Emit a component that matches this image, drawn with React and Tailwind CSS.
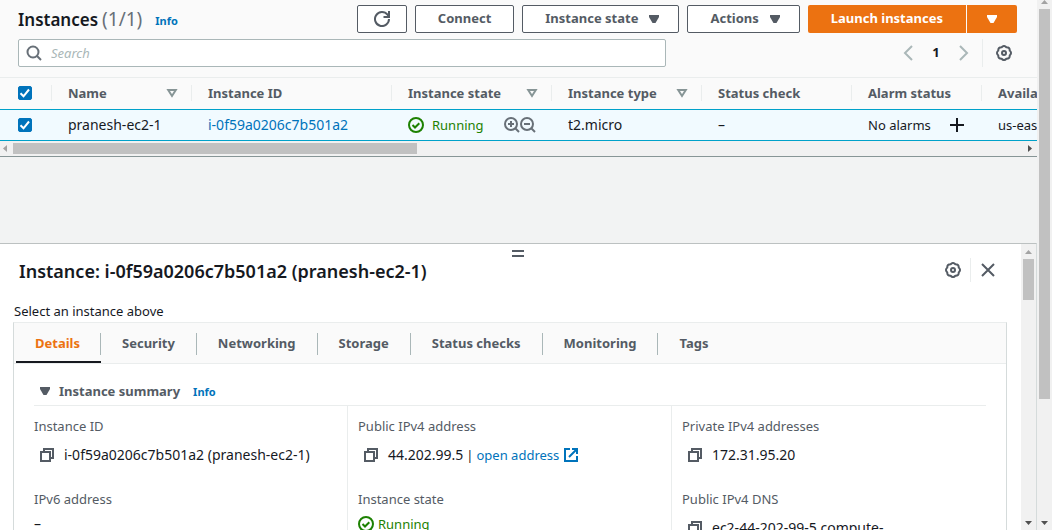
import { useId } from "react";

const CaretDown = ({ className = "" }) => (
  <svg className={`h-4 w-4 shrink-0 ${className}`} viewBox="0 0 16 16" fill="currentColor" aria-hidden="true">
    <path d="M3 4h10v2l-3.500 6h-3L3 6z" />
  </svg>
);

const SortIcon = () => (
  <svg className="h-4 w-4 shrink-0 text-[#879596]" viewBox="0 0 16 16" fill="none" stroke="currentColor" strokeWidth="2" aria-hidden="true">
    <path d="M4.200 5h7.600L8 11z" />
  </svg>
);

const RefreshIcon = () => (
  <svg className="h-4 w-4" viewBox="0 0 16 16" fill="none" stroke="currentColor" strokeWidth="2" aria-hidden="true">
    <path d="M15 8a7 7 0 1 1-1.500-4.300L15 5.500" />
    <path d="M15 0v6H9.500" />
  </svg>
);

const SearchIcon = () => (
  <svg className="h-4 w-4 text-[#687078]" viewBox="0 0 16 16" fill="none" stroke="currentColor" strokeWidth="2" aria-hidden="true">
    <circle cx="7" cy="7" r="5.500" />
    <path d="M10.800 10.800L15 15" />
  </svg>
);

const ZoomFilterIcon = ({ plus }) => (
  <svg className="h-4 w-4 text-[#687078]" viewBox="0 0 16 16" fill="none" stroke="currentColor" strokeWidth="2" aria-hidden="true">
    <circle cx="7" cy="7" r="6" />
    <path d="M11 11l4 4" />
    <path d={plus ? "M4 7h6M7 4v6" : "M4 7h6"} />
  </svg>
);

const GearIcon = () => (
  <svg className="h-4 w-4 text-[#545b64]" viewBox="0 0 16 16" fill="none" stroke="currentColor" strokeWidth="2" strokeLinejoin="round" aria-hidden="true">
    <path d="M5.630 2.270Q8-.3 10.370 2.270Q13.870 2.130 13.730 5.630Q16.300 8 13.730 10.370Q13.870 13.870 10.370 13.730Q8 16.300 5.630 13.730Q2.130 13.870 2.270 10.370Q-.3 8 2.270 5.630Q2.130 2.130 5.630 2.270z" />
    <circle cx="8" cy="8" r="2" />
  </svg>
);

const ChevronIcon = ({ right }) => (
  <svg className="h-4 w-4 text-[#aab7b8]" viewBox="0 0 16 16" fill="none" stroke="currentColor" strokeWidth="2" aria-hidden="true">
    <path d={right ? "M4 1l7 7-7 7" : "M12 1L5 8l7 7"} />
  </svg>
);

const CloseIcon = () => (
  <svg className="h-4 w-4 text-[#545b64]" viewBox="0 0 16 16" fill="none" stroke="currentColor" strokeWidth="2" aria-hidden="true">
    <path d="M2 2l12 12M14 2L2 14" />
  </svg>
);

const PlusIcon = () => (
  <svg className="h-4 w-4" viewBox="0 0 16 16" fill="none" stroke="currentColor" strokeWidth="2" aria-hidden="true">
    <path d="M1 8h14M8 1v14" />
  </svg>
);

const RunningIcon = () => (
  <svg className="h-4 w-4 shrink-0" viewBox="0 0 16 16" fill="none" stroke="currentColor" strokeWidth="2" aria-hidden="true">
    <circle cx="8" cy="8" r="7" />
    <path d="M4.500 8l2.500 2.500 4.300-4.300" />
  </svg>
);

const CopyIcon = () => (
  <svg className="h-4 w-4 text-[#545b64]" viewBox="0 0 16 16" fill="none" stroke="currentColor" strokeWidth="2" aria-hidden="true">
    <path d="M2 5h9v9H2z" />
    <path d="M5 5V2h9v9h-3" />
  </svg>
);

const ExternalIcon = () => (
  <svg className="h-4 w-4" viewBox="0 0 16 16" fill="none" stroke="currentColor" strokeWidth="2" aria-hidden="true">
    <path d="M7 2H2v12h12V9" />
    <path d="M9 2h5v5M14 2L6 10" />
  </svg>
);

function Check({ label }) {
  return (
    <div className="relative ml-[18px] h-[14px] w-[14px]">
      <input type="checkbox" defaultChecked aria-label={label} className="peer block h-[14px] w-[14px] appearance-none rounded-[2px] border border-[#687078] bg-white checked:border-[#0073bb] checked:bg-[#0073bb]" />
      <svg className="pointer-events-none absolute inset-0 hidden h-[14px] w-[14px] peer-checked:block" viewBox="0 0 14 14" fill="none" stroke="#fff" strokeWidth="2" aria-hidden="true">
        <path d="M2.500 7.300l3 3 5.500-6.800" />
      </svg>
    </div>
  );
}

const Button = ({ children, label }) => (
  <button type="button" aria-label={label} className="flex h-7 items-center gap-2 rounded-[2px] border border-[#545b64] bg-white px-[22px] text-[13px] font-bold whitespace-nowrap text-[#545b64]">
    {children}
  </button>
);

const Info = () => (
  <a href="#info" className="text-[11px] leading-4 font-bold text-[#0073bb]">Info</a>
);

function VerticalScrollbar({ children, showTop }) {
  return (
    <div className="flex w-[15px] shrink-0 flex-col items-center bg-[#f1f1f1]" aria-hidden="true">
      <svg className={showTop ? "h-[15px] w-[15px] shrink-0" : "-mt-[6px] h-[15px] w-[15px] shrink-0"} viewBox="0 0 15 15">
        <path d="M4 10h7L7.500 6z" fill="#a3a3a3" />
      </svg>
      {children}
      <svg className="mt-auto h-[15px] w-[15px] shrink-0" viewBox="0 0 15 15">
        <path d="M4 6h7L7.500 10z" fill="#505050" />
      </svg>
    </div>
  );
}

const columns = [
  { name: "Name", sortable: true },
  { name: "Instance ID" },
  { name: "Instance state", sortable: true },
  { name: "Instance type", sortable: true },
  { name: "Status check" },
  { name: "Alarm status" },
  { name: "Availability Zone" },
];

function InstancesTable() {
  const cell = "border-y border-[#00a1c9] px-4 whitespace-nowrap";
  return (
    <div className="overflow-hidden">
      <table className="w-[1142px] table-fixed border-separate border-spacing-0 text-left">
        <colgroup>
          <col className="w-[52px]" />
          <col className="w-[140px]" />
          <col className="w-[200px]" />
          <col className="w-[160px]" />
          <col className="w-[150px]" />
          <col className="w-[150px]" />
          <col className="w-[130px]" />
          <col className="w-[160px]" />
        </colgroup>
        <thead className="bg-[#fafafa] text-[13px] text-[#545b64]">
          <tr className="h-[31px]">
            <th className="px-0 pt-0 pb-[2px]">
              <div className="flex h-4 items-center border-r border-[#eaeded]"><Check label="Select all instances" /></div>
            </th>
            {columns.map(({ name, sortable }) => (
              <th key={name} scope="col" className="px-0 pt-0 pb-[2px]">
                <div className="flex h-4 items-center justify-between border-r border-[#eaeded] pr-[11px] pl-4 leading-4 font-bold whitespace-nowrap">
                  {name}
                  {sortable && <SortIcon />}
                </div>
              </th>
            ))}
          </tr>
        </thead>
        <tbody className="bg-[#f1faff] text-[14px] leading-5">
          <tr className="h-8">
            <td className="border-y border-[#00a1c9] p-0"><Check label="Select pranesh-ec2-1" /></td>
            <td className={cell}>pranesh-ec2-1</td>
            <td className={cell}><a href="#instance" className="text-[#0073bb]">i-0f59a0206c7b501a2</a></td>
            <td className={cell}>
              <div className="flex items-center">
                <span className="flex items-center gap-2 text-[13px] text-[#1d8102]"><RunningIcon />Running</span>
                <span className="ml-5 flex">
                  <button type="button" aria-label="Add filter"><ZoomFilterIcon plus /></button>
                  <button type="button" aria-label="Exclude filter"><ZoomFilterIcon /></button>
                </span>
              </div>
            </td>
            <td className={cell}>t2.micro</td>
            <td className={cell}>–</td>
            <td className={cell}>
              <div className="flex items-center gap-[18px] text-[13px]">No alarms <button type="button" aria-label="Create alarm"><PlusIcon /></button></div>
            </td>
            <td className={cell}><span className="text-[13px]">us-east-1a</span></td>
          </tr>
        </tbody>
      </table>
      <div className="flex h-[15px] items-center bg-[#f1f1f1]" aria-hidden="true">
        <svg className="h-[15px] w-[13px]" viewBox="0 0 13 15"><path d="M7 4v7L3 7.500z" fill="#a3a3a3" /></svg>
        <div className="h-[11px] w-[39%] bg-[#c1c1c1]" />
        <svg className="ml-auto h-[15px] w-[15px]" viewBox="0 0 15 15"><path d="M6 4v7l4-3.500z" fill="#505050" /></svg>
      </div>
    </div>
  );
}

function InstancesHeader() {
  const id = useId();
  return (
    <header className="border-b border-[#eaeded] bg-[#fafafa] pt-[5px] pr-5 pb-[10px] pl-[18px]">
      <div className="flex h-7 items-center">
        <h1 className="flex items-baseline gap-1 text-[17px] leading-7 font-semibold">
          Instances <span className="text-[19px] font-normal text-[#687078]">(1/1)</span>
        </h1>
        <span className="mt-1 ml-[13px] flex"><Info /></span>
        <div className="ml-auto flex gap-2">
          <Button label="Refresh"><span className="-mx-[6px]"><RefreshIcon /></span></Button>
          <Button>Connect</Button>
          <Button>Instance state <CaretDown className="-mr-[6px]" /></Button>
          <Button>Actions <CaretDown className="-mr-[6px]" /></Button>
          <div className="flex gap-px text-[13px] font-bold whitespace-nowrap text-white">
            <button type="button" className="h-7 rounded-l-[2px] bg-[#ec7211] px-[23px]">Launch instances</button>
            <button type="button" aria-label="More launch options" className="h-7 rounded-r-[2px] bg-[#ec7211] px-[17px]"><CaretDown /></button>
          </div>
        </div>
      </div>
      <div className="mt-[6px] flex items-center">
        <div className="flex h-7 w-[648px] items-center gap-[9px] rounded-[2px] border border-[#aab7b8] bg-white pl-[7px]">
          <label htmlFor={id}><SearchIcon /></label>
          <input id={id} type="text" aria-label="Search instances" placeholder="Search" className="min-w-0 flex-1 pt-[2px] text-[13px] outline-none placeholder:text-[#aab7b8] placeholder:italic" />
        </div>
        <nav className="ml-auto flex items-center" aria-label="Pagination">
          <button type="button" aria-label="Previous page"><ChevronIcon /></button>
          <button type="button" className="w-10 text-[13px] font-bold">1</button>
          <button type="button" aria-label="Next page"><ChevronIcon right /></button>
        </nav>
        <div className="ml-[10px] flex h-7 items-center border-l border-[#eaeded] pr-[5px] pl-[13px]">
          <button type="button" aria-label="Preferences"><GearIcon /></button>
        </div>
      </div>
    </header>
  );
}

const tabs = ["Details", "Security", "Networking", "Storage", "Status checks", "Monitoring", "Tags"];

const Copy = () => (
  <button type="button" aria-label="Copy" className="mt-[2px] mr-[9px] ml-[5px] h-4"><CopyIcon /></button>
);

function Field({ label, children }) {
  return (
    <div className="pb-6">
      <dt className="text-[13px] leading-5 text-[#545b64]">{label}</dt>
      <dd className="text-[14px] leading-5">{children}</dd>
    </div>
  );
}

function Details() {
  return (
    <section className="px-[10px] pt-[17px]">
      <div className="mx-[10px] flex h-[25px] items-start gap-3 border-b border-[#eaeded]">
        <h3>
          <button type="button" className="ml-[3px] flex items-center gap-[6px] text-[13px] leading-5 font-bold text-[#545b64]">
            <CaretDown />Instance summary
          </button>
        </h3>
        <span className="mt-[3px] ml-px flex"><Info /></span>
      </div>
      <div className="grid grid-cols-3">
        <dl className="border-r border-[#eaeded] pt-[10px] pl-[10px]">
          <Field label="Instance ID"><span className="flex pt-[9px]"><Copy />i-0f59a0206c7b501a2 (pranesh-ec2-1)</span></Field>
          <Field label="IPv6 address"><span className="flex pt-[5px]">–</span></Field>
        </dl>
        <dl className="border-r border-[#eaeded] pt-[10px] pl-[10px]">
          <Field label="Public IPv4 address">
            <span className="flex pt-[9px]">
              <Copy />44.202.99.5
              <span className="mx-[3px] text-[13px]">|</span>
              <a href="#open" className="flex items-center gap-1 text-[13px] text-[#0073bb]">open address <ExternalIcon /></a>
            </span>
          </Field>
          <Field label="Instance state"><span className="flex items-center gap-1 pt-[5px] text-[13px] text-[#1d8102]"><RunningIcon />Running</span></Field>
        </dl>
        <dl className="pt-[10px] pl-[10px]">
          <Field label="Private IPv4 addresses"><span className="flex pt-[9px]"><Copy />172.31.95.20</span></Field>
          <Field label="Public IPv4 DNS"><span className="flex pt-[9px]"><Copy />ec2-44-202-99-5.compute-</span></Field>
        </dl>
      </div>
    </section>
  );
}

function InstancePanel() {
  return (
    <section className="mt-[86px] flex min-h-0 flex-1 border-t border-r border-t-[#bcc1c1] border-r-[#d5dbdb] bg-white">
      <div className="min-w-0 flex-1 overflow-hidden">
        <div className="flex h-[13px] items-start justify-center pt-[6px] pl-[15px]">
          <button type="button" aria-label="Resize panel" className="h-[7px] w-3 border-y-2 border-[#545b64]" />
        </div>
        <div className="flex items-start justify-between pr-[25px] pl-[19px]">
          <h2 className="text-[18px] leading-7 font-semibold">Instance: i-0f59a0206c7b501a2 (pranesh-ec2-1)</h2>
          <div className="flex h-[26px] items-center">
            <button type="button" aria-label="Panel preferences" className="pr-[9px]"><GearIcon /></button>
            <button type="button" aria-label="Close panel" className="flex h-6 items-center border-l border-[#eaeded] pl-[9px]"><CloseIcon /></button>
          </div>
        </div>
        <p className="mt-4 mb-px pl-[14px] text-[13px] leading-5">Select an instance above</p>
        <div className="mr-[14px] ml-[13px] border border-[#d5dbdb] border-t-[#eaeded]">
          <div role="tablist" className="flex h-[41px] items-center border-b border-[#eaeded] bg-[#fafafa] pl-[2px] text-[13px] font-bold text-[#545b64]">
            {tabs.map((tab, i) => (
              <button
                key={tab}
                type="button"
                role="tab"
                aria-selected={i === 0}
                className="group h-10 border-b-2 border-transparent pt-[3px] aria-selected:border-[#16191f] aria-selected:text-[#ec7211]"
              >
                <span className="flex h-[22px] items-center border-r border-[#aab7b8] px-[21px] group-first:pr-5 group-first:pl-[19px] group-last:border-transparent">{tab}</span>
              </button>
            ))}
          </div>
          <Details />
        </div>
      </div>
      <VerticalScrollbar showTop><div className="h-[41px] w-[11px] bg-[#c1c1c1]" /></VerticalScrollbar>
    </section>
  );
}

export default function App() {
  return (
    <div className="flex h-screen overflow-hidden bg-[#f2f3f3] font-['Noto_Sans',sans-serif] text-[#16191f]">
      <main className="flex min-w-0 flex-1 flex-col">
        <div className="border-b border-[#879596]">
          <InstancesHeader />
          <InstancesTable />
        </div>
        <InstancePanel />
      </main>
      <VerticalScrollbar><div className="h-[73.500%] w-[11px] bg-[#c1c1c1]" /></VerticalScrollbar>
    </div>
  );
}
